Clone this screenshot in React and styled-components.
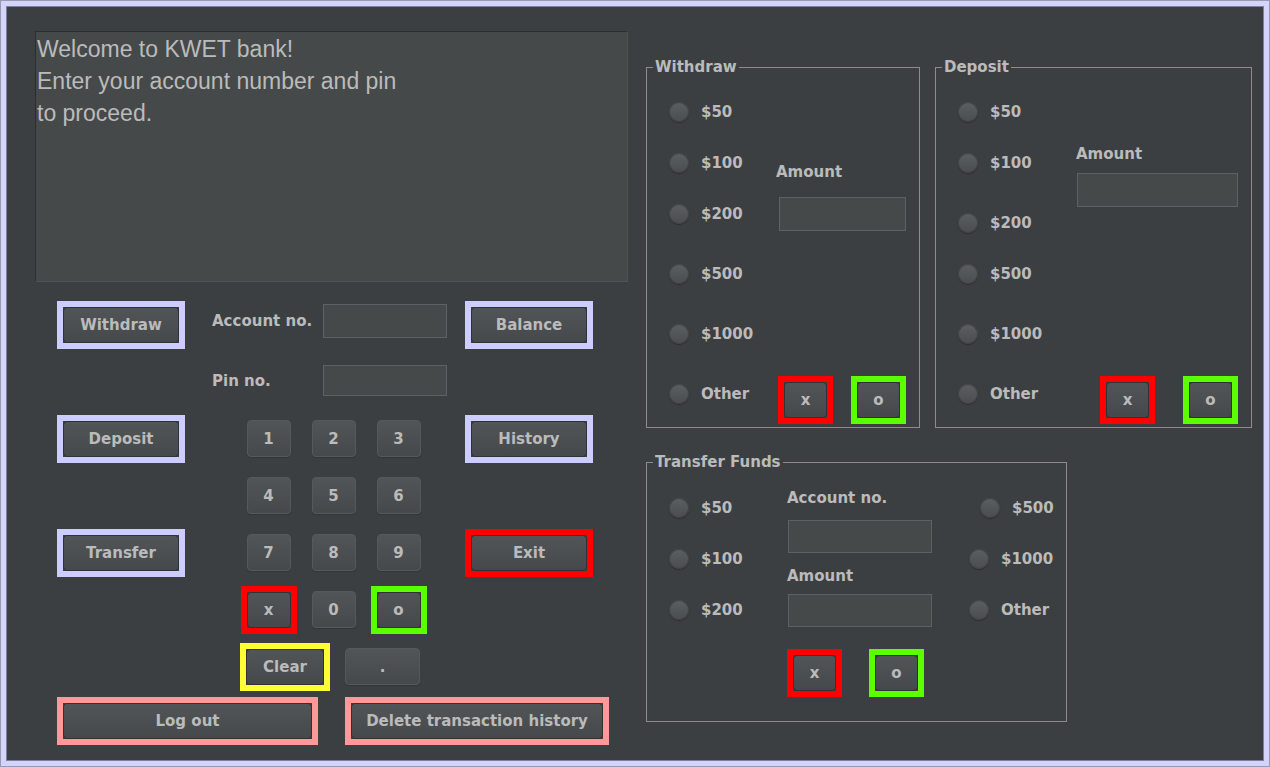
import React from 'react';
import styled, { createGlobalStyle } from 'styled-components';

const GlobalStyle = createGlobalStyle`
  html, body {
    margin: 0;
    padding: 0;
    background: #d3d3fb;
  }
  * {
    box-sizing: border-box;
  }
`;

const LAVENDER = '#ccccff';
const RED = '#ff0000';
const GREEN = '#5cff00';
const YELLOW = '#ffff33';
const PINK = '#ff9999';

const Window = styled.div`
  width: 1270px;
  height: 767px;
  border: 1px solid #9898b0;
  background: #d3d3fb;
  padding: 5px;
  display: flex;
`;

const Panel = styled.main`
  flex: 1;
  display: flex;
  gap: 18px;
  padding: 24px 0 0 28px;
  background: #3c3f41;
  border: 1px solid #80809a;
  font-family: "DejaVu Sans", "Liberation Sans", sans-serif;
  font-weight: bold;
  font-size: 15px;
  color: #bbbbbb;
`;

const LeftCol = styled.section`
  width: 593px;
  display: flex;
  flex-direction: column;
`;

const Screen = styled.div`
  height: 251px;
  padding: 1px 0 0 1px;
  background: #45494a;
  border: 1px solid #2b2d2e;
  border-right-color: #4e5254;
  border-bottom-color: #4e5254;
  font-family: "Liberation Sans", Arial, sans-serif;
  font-weight: normal;
  font-size: 23px;
  line-height: 32px;
  white-space: pre-line;
  color: #bbbbbb;
`;

const Controls = styled.div`
  margin-top: 14px;
  padding-left: 22px;
  display: grid;
  grid-template-columns: 128px 280px 128px;
  grid-auto-rows: 57px;
  align-items: center;
`;

const Cell = styled.div``;

const Framed = styled.div`
  display: inline-flex;
  border: 6px solid ${p => p.$c};
  background: #3c3f41;
`;

const Btn = styled.button`
  width: ${p => p.$w}px;
  height: ${p => p.$h || 36}px;
  padding: 0;
  border: 1px solid ${p => (p.$framed ? '#303234' : '#55595b')};
  border-radius: 4px;
  background: linear-gradient(to bottom, #515557, #45494b);
  box-shadow: ${p => (p.$framed ? 'none' : '0 1px 1px rgba(0,0,0,0.15)')};
  font-family: "DejaVu Sans", "Liberation Sans", sans-serif;
  font-weight: bold;
  font-size: 15px;
  color: #bbbbbb;
  cursor: pointer;
`;

const FieldRow = styled.div`
  display: flex;
  align-items: center;
  padding-left: 27px;
  margin-bottom: ${p => p.$mb}px;
`;

const Label = styled.span`
  display: block;
  width: ${p => (p.$w ? `${p.$w}px` : 'auto')};
  line-height: 18px;
  margin-top: ${p => p.$mt || 0}px;
`;

const Input = styled.input`
  width: ${p => p.$w}px;
  height: ${p => p.$h}px;
  margin: ${p => p.$mt || 0}px 0 0 ${p => p.$ml || 0}px;
  padding: 0 4px;
  background: #45494a;
  border: 1px solid #5d6163;
  color: #bbbbbb;
  outline: none;
`;

const KeyRow = styled.div`
  display: grid;
  grid-template-columns: repeat(3, 57px);
  column-gap: 8px;
  padding-left: 55px;
  justify-items: center;
  align-items: center;
`;

const ClearRow = styled.div`
  display: flex;
  align-items: center;
  gap: 15px;
  padding-left: 55px;
`;

const BottomRow = styled.div`
  display: flex;
  gap: 27px;
  margin-top: 2px;
  padding-left: 22px;
`;

const RightCol = styled.section`
  display: flex;
  flex-direction: column;
  gap: 25px;
  padding-top: 27px;
`;

const TopRow = styled.div`
  display: flex;
  gap: 15px;
`;

const Group = styled.fieldset`
  width: ${p => p.$w}px;
  height: ${p => p.$h}px;
  margin: 0;
  padding: 0;
  min-width: 0;
  border: 1px solid #8c8c8c;
  display: flex;
`;

const Legend = styled.legend`
  margin-left: 6px;
  padding: 0 2px;
  line-height: 18px;
  font-size: 15px;
  color: #bbbbbb;
`;

const RadioList = styled.div`
  width: ${p => (p.$w ? `${p.$w}px` : 'auto')};
  padding-left: ${p => p.$pl || 0}px;
  display: flex;
  flex-direction: column;
  align-items: flex-start;
`;

const RadioItem = styled.label`
  display: flex;
  align-items: center;
  gap: 12px;
  height: 20px;
  margin-top: ${p => p.$mt}px;
  margin-left: ${p => p.$ml || 0}px;
  line-height: 18px;
`;

const Dot = styled.span`
  width: 20px;
  height: 20px;
  border-radius: 50%;
  background: linear-gradient(to bottom, #5c5f62, #4a4d4f);
  box-shadow: 0 1px 1px #2a2c2d, inset 0 0 0 1px #404345;
`;

const Column = styled.div`
  display: flex;
  flex-direction: column;
  align-items: flex-start;
  width: ${p => (p.$w ? `${p.$w}px` : 'auto')};
  padding-top: ${p => p.$pt || 0}px;
`;

const ActionRow = styled.div`
  display: flex;
  gap: ${p => p.$gap}px;
  margin: ${p => p.$mt}px 0 0 ${p => p.$ml || 0}px;
`;

function Radio({ label, mt, ml }) {
  return (
    <RadioItem $mt={mt} $ml={ml}>
      <Dot />
      {label}
    </RadioItem>
  );
}

function Key({ children, color, w = 44 }) {
  if (color) {
    return (
      <Framed $c={color}>
        <Btn $w={w} $framed>{children}</Btn>
      </Framed>
    );
  }
  return <Btn $w={w} $h={37}>{children}</Btn>;
}

function Actions({ mt, ml, gap }) {
  return (
    <ActionRow $mt={mt} $ml={ml} $gap={gap}>
      <Key color={RED} w={43}>x</Key>
      <Key color={GREEN} w={43}>o</Key>
    </ActionRow>
  );
}

const withdrawRadios = [
  ['$50', 26], ['$100', 31], ['$200', 31], ['$500', 40], ['$1000', 40], ['Other', 40],
];
const depositRadios = [
  ['$50', 26], ['$100', 31], ['$200', 40], ['$500', 31], ['$1000', 40], ['Other', 40],
];

export default function App() {
  return (
    <>
      <GlobalStyle />
      <Window>
        <Panel>
          <LeftCol>
            <Screen>
              {'Welcome to KWET bank!\nEnter your account number and pin\nto proceed.'}
            </Screen>

            <Controls>
              <Key color={LAVENDER} w={116}>Withdraw</Key>
              <FieldRow $mb={8}>
                <Label $w={111}>Account no.</Label>
                <Input $w={124} $h={34} />
              </FieldRow>
              <Key color={LAVENDER} w={116}>Balance</Key>

              <Cell />
              <FieldRow $mb={2}>
                <Label $w={111}>Pin no.</Label>
                <Input $w={124} $h={31} />
              </FieldRow>
              <Cell />

              <Key color={LAVENDER} w={116}>Deposit</Key>
              <KeyRow>
                <Key>1</Key>
                <Key>2</Key>
                <Key>3</Key>
              </KeyRow>
              <Key color={LAVENDER} w={116}>History</Key>

              <Cell />
              <KeyRow>
                <Key>4</Key>
                <Key>5</Key>
                <Key>6</Key>
              </KeyRow>
              <Cell />

              <Key color={LAVENDER} w={116}>Transfer</Key>
              <KeyRow>
                <Key>7</Key>
                <Key>8</Key>
                <Key>9</Key>
              </KeyRow>
              <Key color={RED} w={116}>Exit</Key>

              <Cell />
              <KeyRow>
                <Key color={RED}>x</Key>
                <Key>0</Key>
                <Key color={GREEN}>o</Key>
              </KeyRow>
              <Cell />

              <Cell />
              <ClearRow>
                <Key color={YELLOW} w={78}>Clear</Key>
                <Key w={75}>.</Key>
              </ClearRow>
              <Cell />
            </Controls>

            <BottomRow>
              <Key color={PINK} w={249}>Log out</Key>
              <Key color={PINK} w={252}>Delete transaction history</Key>
            </BottomRow>
          </LeftCol>

          <RightCol>
            <TopRow>
              <Group $w={274} $h={370}>
                <Legend>Withdraw</Legend>
                <RadioList $w={129} $pl={22}>
                  {withdrawRadios.map(([l, mt]) => (
                    <Radio key={l} label={l} mt={mt} />
                  ))}
                </RadioList>
                <Column $pt={87}>
                  <Label>Amount</Label>
                  <Input $w={127} $h={34} $mt={16} $ml={3} />
                  <Actions mt={145} ml={2} gap={18} />
                </Column>
              </Group>

              <Group $w={317} $h={370}>
                <Legend>Deposit</Legend>
                <RadioList $w={140} $pl={22}>
                  {depositRadios.map(([l, mt]) => (
                    <Radio key={l} label={l} mt={mt} />
                  ))}
                </RadioList>
                <Column $pt={69}>
                  <Label>Amount</Label>
                  <Input $w={161} $h={34} $mt={10} $ml={1} />
                  <Actions mt={169} ml={24} gap={28} />
                </Column>
              </Group>
            </TopRow>

            <Group $w={421} $h={269}>
              <Legend>Transfer Funds</Legend>
              <RadioList $w={140} $pl={22}>
                <Radio label="$50" mt={27} />
                <Radio label="$100" mt={31} />
                <Radio label="$200" mt={31} />
              </RadioList>
              <Column $w={182} $pt={18}>
                <Label>Account no.</Label>
                <Input $w={144} $h={33} $mt={13} $ml={1} />
                <Label $mt={14}>Amount</Label>
                <Input $w={144} $h={33} $mt={9} $ml={1} />
                <Actions mt={22} gap={27} />
              </Column>
              <RadioList>
                <Radio label="$500" mt={27} ml={11} />
                <Radio label="$1000" mt={31} />
                <Radio label="Other" mt={31} />
              </RadioList>
            </Group>
          </RightCol>
        </Panel>
      </Window>
    </>
  );
}
